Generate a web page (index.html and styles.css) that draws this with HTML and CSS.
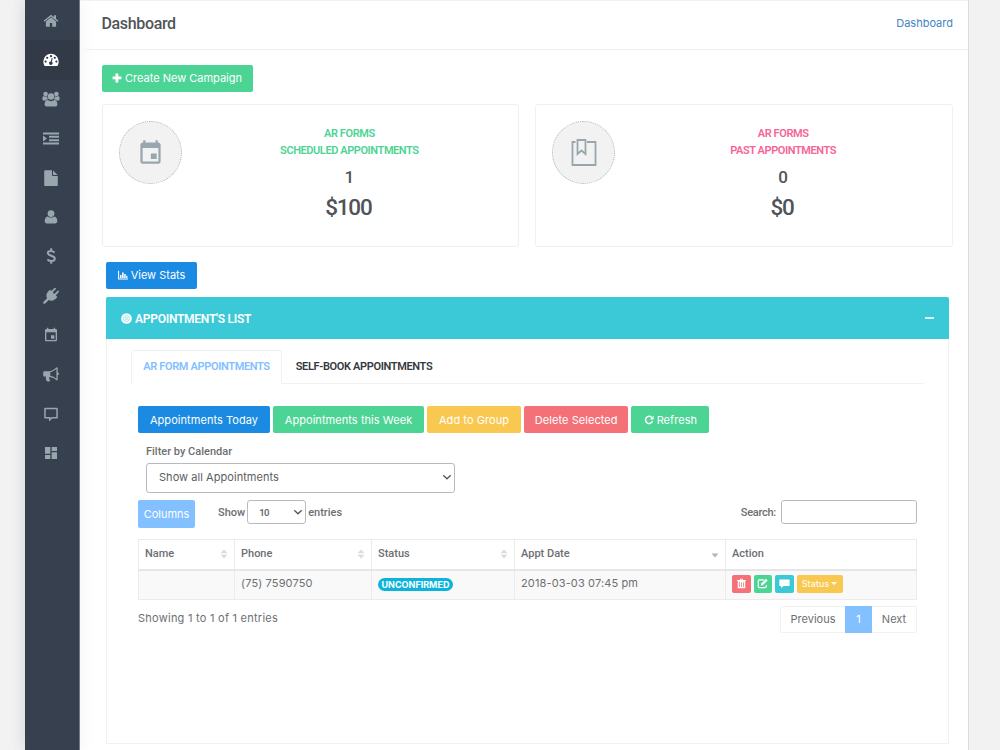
FILE: index.html
```
<!DOCTYPE html>
<html lang="en">
<head>
    <meta charset="UTF-8">
    <meta name="viewport" content="width=device-width, initial-scale=1.0">
    <title>Dashboard</title>
    <link rel="stylesheet" href="styles.css">
</head>
<body>
    <div class="wrapper">
        <nav class="sidebar">
            <a class="nav-item"><svg viewBox="0 0 16 16"><path d="M8 4.2 2.9 8.4v4.7c0 .4.3.6.6.6h3.3V10h2.4v3.7h3.3c.4 0 .6-.3.6-.6V8.4z"/><path d="M15.4 7.8 13 5.8V2.2h-2v1.9L8.9 2.4c-.5-.4-1.3-.4-1.8 0L.6 7.8l.9 1L8 3.4l6.5 5.4z"/></svg></a>
            <a class="nav-item active"><svg viewBox="0 0 16 16"><path fill-rule="evenodd" d="M8 1.8A7.7 7.7 0 0 0 .3 9.5c0 1.6.4 3 1.2 4.2.1.2.3.3.5.3h12c.2 0 .4-.1.5-.3a7.7 7.7 0 0 0 1.2-4.2A7.7 7.7 0 0 0 8 1.8zM2.6 8.5a1.1 1.1 0 1 1 0 2.2 1.1 1.1 0 0 1 0-2.2zM4.2 4.7a1.1 1.1 0 1 1 0 2.2 1.1 1.1 0 0 1 0-2.2zM8 3.1a1.1 1.1 0 1 1 0 2.2 1.1 1.1 0 0 1 0-2.2zM11.8 4.7a1.1 1.1 0 1 1 0 2.2 1.1 1.1 0 0 1 0-2.2zM13.4 8.5a1.1 1.1 0 1 1 0 2.2 1.1 1.1 0 0 1 0-2.2zM8.7 6.1l1 .3-.9 3.4a1.7 1.7 0 1 1-1-.3z"/></svg></a>
            <a class="nav-item"><svg class="wide" viewBox="0 0 18 16"><circle cx="3.6" cy="3" r="2.3"/><circle cx="14.4" cy="3" r="2.3"/><path d="M.4 8.3c0-2 .5-3.2 1.4-3.2 1 .7 2.3.8 3.4.2 0 1.3.3 2.2 1 3-1.1 0-2 .4-2.6 1.2H1.8C1 9.500.4 9.100.4 8.300zM17.6 8.300c0-2-.5-3.200-1.400-3.200-1 .7-2.300.8-3.400.2 0 1.300-.3 2.200-1 3 1.100 0 2 .4 2.600 1.200h1.800c.8 0 1.400-.4 1.400-1.200z"/><circle cx="9" cy="5.5" r="3.2"/><path d="M5.500 9c-1.800 0-2.900 2-2.900 4.300 0 1.400.9 2.200 2.200 2.200h8.400c1.300 0 2.200-.8 2.200-2.200 0-2.300-1.100-4.300-2.900-4.300-2 1.500-5 1.500-7 0z"/></svg></a>
            <a class="nav-item"><svg viewBox="0 0 16 16"><path d="M0 1.500h16v2H0zM6 4.800h10v2H6zM6 8.200h10v2H6zM0 11.500h16v2H0zM0 4.600l4 3-4 3z"/></svg></a>
            <a class="nav-item"><svg viewBox="0 0 16 16"><path d="M1.200 1c0-.5.3-.8.8-.8h7v5c0 .5.3.8.8.8h5v9.200c0 .4-.3.8-.8.8H2c-.5 0-.8-.4-.8-.8zM10 .4l4.600 4.600H10z"/></svg></a>
            <a class="nav-item"><svg viewBox="0 0 16 16"><circle cx="8" cy="4.6" r="3.4"/><path d="M4.700 7.400C2.700 7.500 1.700 9.600 1.700 12c0 1.300.9 2.400 2.200 2.400h8.200c1.300 0 2.200-1.100 2.200-2.400 0-2.400-1-4.500-3-4.600-2 1.600-4.600 1.600-6.600 0z"/></svg></a>
            <a class="nav-item"><svg viewBox="0 0 16 16"><path class="stroke" d="M11.600 4.500C10.300 3.300 8.800 2.900 7.700 2.900c-1.700 0-2.900.9-2.900 2.200 0 3.300 7 2 7 5.500 0 1.500-1.300 2.500-3.300 2.500-1.500 0-3-.5-4.100-1.600M8.200.3v2.400M8.200 13.200v2.500"/></svg></a>
            <a class="nav-item"><svg viewBox="0 0 16 16"><path d="M15.700 4.200c.4-.4.3-1-.1-1.300-.4-.4-.9-.4-1.300 0l-2.900 3-1.700-1.700 3-2.900c.4-.4.3-.9 0-1.200-.4-.4-.9-.4-1.300 0l-3 2.900L7 1.700 5.400 3.300c-2 2-2.600 4.800-1.300 7L.3 14v1.700H2L5.700 12c2.300 1.300 5.100.7 7.100-1.300l1.500-1.600-1.500-1.900z"/></svg></a>
            <a class="nav-item"><svg viewBox="0 0 24 24"><path d="M17 12.500h-5v5h5zM16 1v2H8V1H6v2H5c-1.100 0-2 .9-2 2v14.500c0 1.100.9 2 2 2h14c1.100 0 2-.9 2-2V5c0-1.100-.9-2-2-2h-1V1zm3 18.500H5V8h14z"/></svg></a>
            <a class="nav-item"><svg viewBox="0 0 16 16"><path fill-rule="evenodd" d="M14.700 2.100v4.200c1.600.2 1.600 2.600 0 2.800v4.500c-.1.800-.8 1-1.300.7-1.900-1.800-4.200-3-6.700-3.300-.7.3-.8 1-.2 1.600-.5.6 0 1.200.8 1.900-.6 1.200-3 1.100-3.700.5-.5-1.500-1.200-2.700-.6-4.400H1.500C.8 10.600.2 10 .2 9.300V6.600c0-.8.6-1.400 1.400-1.400h4c3 0 5.400-1.300 7.800-3.700.6-.4 1.300-.1 1.300.6zm-1.300.9c-1.900 1.600-3.900 2.700-6.100 3.100v3.700c2.200.4 4.200 1.500 6.100 3z"/></svg></a>
            <a class="nav-item"><svg viewBox="0 0 16 16"><path fill-rule="evenodd" d="M2 1.700h12c.5 0 .8.3.8.8v9.300c0 .5-.3.8-.8.8H9.300L6 15.500v-2.900H2c-.5 0-.8-.3-.8-.8V2.500c0-.5.3-.8.8-.8zm.7 1.500v7.900h4.800v1.200l1.300-1.200h4.500V3.200z"/></svg></a>
            <a class="nav-item"><svg viewBox="0 0 24 24"><path d="M3 13h8V3H3zm0 8h8v-6H3zm10 0h8V11h-8zm0-18v6h8V3z"/></svg></a>
        </nav>

        <main class="content">
            <header class="page-header">
                <h1>Dashboard</h1>
                <a class="breadcrumb">Dashboard</a>
            </header>

            <a class="btn green create"><svg viewBox="0 0 12 12"><path d="M4.200.7h3.400v3.500h3.700v3.400H7.600v3.700H4.200V7.600H.7V4.200h3.500z"/></svg>Create New Campaign</a>

            <div class="cards">
                <div class="card">
                    <div class="card-icon">
                        <svg viewBox="0 0 24 24"><path d="M17.500 12.800h-5.200v5h5.200zM16.500 1v2h-9V1h-2v2H5c-1.100 0-2 .9-2 2v15c0 1.100.9 2 2 2h14c1.100 0 2-.9 2-2V5c0-1.100-.9-2-2-2h-.5V1zm2.500 19H5V8h14z"/></svg>
                    </div>
                    <div class="card-info">
                        <h4 class="text-green">AR FORMS<br>SCHEDULED APPOINTMENTS</h4>
                        <div class="count">1</div>
                        <div class="amount">$100</div>
                    </div>
                </div>
                <div class="card">
                    <div class="card-icon">
                        <svg class="book" viewBox="0 0 26 28"><path class="line" d="M4.500 3H1.500v23h23V3H16M6.500 1h8v14l-4-3.500-4 3.500z"/></svg>
                    </div>
                    <div class="card-info">
                        <h4 class="text-pink">AR FORMS<br>PAST APPOINTMENTS</h4>
                        <div class="count">0</div>
                        <div class="amount">$0</div>
                    </div>
                </div>
            </div>

            <a class="btn blue stats"><svg viewBox="0 0 12 12"><path d="M0 1h1.300v9.200H12v1.300H0zM2.300 6h2v3.500h-2zM4.900 3h1.900v6.500H4.900zM7.400 4.800h1.800v4.700H7.400zM9.800 7h1.500v2.500H9.800z"/></svg>View Stats</a>

            <section class="panel">
                <div class="panel-header">
                    <h2><svg viewBox="0 0 12 12"><circle cx="6" cy="6" r="5.8"/><circle class="ring" cx="6" cy="6" r="3.2"/><circle class="ring" cx="6" cy="6" r="1.2"/></svg>APPOINTMENT'S LIST</h2>
                    <span class="collapse"></span>
                </div>
                <div class="panel-body">
                    <div class="tabs">
                        <a class="tab active">AR FORM APPOINTMENTS</a>
                        <a class="tab self-book">SELF-BOOK APPOINTMENTS</a>
                    </div>

                    <div class="toolbar">
                        <a class="btn blue today">Appointments Today</a>
                        <a class="btn green week">Appointments this Week</a>
                        <a class="btn yellow group">Add to Group</a>
                        <a class="btn red delete">Delete Selected</a>
                        <a class="btn green refresh"><svg viewBox="0 0 12 12"><path class="arc" d="M10.200 7.300A4.300 4.300 0 1 1 9.300 3"/><path d="M11.500 1v4.500H7z"/></svg>Refresh</a>
                    </div>

                    <div class="filter">
                        <label>Filter by Calendar</label>
                        <div class="select">Show all Appointments<svg viewBox="0 0 10 10"><path d="M1.300 3.200 5 6.800l3.700-3.600"/></svg></div>
                    </div>

                    <div class="table-controls">
                        <a class="btn light columns">Columns</a>
                        <div class="length">
                            <span>Show</span>
                            <div class="select small">10<svg viewBox="0 0 10 10"><path d="M1.300 3.200 5 6.800l3.700-3.600"/></svg></div>
                            <span>entries</span>
                        </div>
                        <label class="search"><span>Search:</span> <input type="text"></label>
                    </div>

                    <table>
                        <colgroup>
                            <col class="col-name">
                            <col class="col-phone">
                            <col class="col-status">
                            <col class="col-date">
                            <col class="col-action">
                        </colgroup>
                        <thead>
                            <tr>
                                <th><div class="th">Name<svg class="sort" viewBox="0 0 8 10"><path d="M4 .5 7.500 4.300h-7zM.5 5.700h7L4 9.500z"/></svg></div></th>
                                <th><div class="th">Phone<svg class="sort" viewBox="0 0 8 10"><path d="M4 .5 7.500 4.300h-7zM.5 5.700h7L4 9.500z"/></svg></div></th>
                                <th><div class="th">Status<svg class="sort" viewBox="0 0 8 10"><path d="M4 .5 7.500 4.300h-7zM.5 5.700h7L4 9.500z"/></svg></div></th>
                                <th><div class="th">Appt Date<svg class="sort desc" viewBox="0 0 8 10"><path d="M.5 4.500h7L4 8.500z"/></svg></div></th>
                                <th><div class="th">Action</div></th>
                            </tr>
                        </thead>
                        <tbody>
                            <tr>
                                <td></td>
                                <td class="phone">(75) 7590750</td>
                                <td><span class="badge">UNCONFIRMED</span></td>
                                <td class="date">2018-03-03 07:45 pm</td>
                                <td>
                                    <div class="actions">
                                        <a class="action red"><svg viewBox="0 0 12 12"><path fill-rule="evenodd" d="M1.200 2.200h3L4.600.7h2.800l.4 1.500h3v1h-.7v8.100H1.900V3.200h-.7zM5.200 2.200h1.600l-.2-.6H5.400zM3.500 4.500v5.300h.8V4.500zm2.100 0v5.300h.8V4.500zm2.100 0v5.300h.8V4.500z"/></svg></a>
                                        <a class="action green"><svg viewBox="0 0 12 12"><path class="edit" d="M7.500 2H2.700C1.900 2 1.400 2.500 1.400 3.200v6.100c0 .8.5 1.300 1.300 1.300h6.100c.8 0 1.300-.5 1.300-1.300V7.500"/><path d="M4.500 6.100 9.700.8l1.900 1.900-5.300 5.200-2.200.4z"/></svg></a>
                                        <a class="action teal"><svg viewBox="0 0 12 12"><path d="M1 1.500h10c.4 0 .6.2.6.6v6c0 .4-.2.6-.6.6H5L2.300 11V8.700H1c-.4 0-.6-.2-.6-.6v-6c0-.4.2-.6.6-.6z"/></svg></a>
                                        <a class="action yellow status">Status<i class="caret"></i></a>
                                    </div>
                                </td>
                            </tr>
                        </tbody>
                    </table>

                    <div class="table-footer">
                        <span class="info">Showing 1 to 1 of 1 entries</span>
                        <div class="pagination">
                            <a class="prev">Previous</a>
                            <a class="current">1</a>
                            <a class="next">Next</a>
                        </div>
                    </div>
                </div>
            </section>
        </main>
    </div>
</body>
</html>
```
FILE: styles.css
```
:root {
    --green: #4cd495;
    --blue: #1a8ae2;
    --light-blue: #82c0ff;
    --teal: #3bc9d8;
    --yellow: #f9c851;
    --red: #f57178;
    --pink: #f76397;
    --border: #f0f1f1;
    --heading-font: Roboto, "Liberation Sans", sans-serif;
}

* {
    box-sizing: border-box;
    margin: 0;
    padding: 0;
}

body {
    background: #f2f2f2;
    font-family: Inter, "Open Sans", sans-serif;
    font-size: 11px;
    color: #6d6f72;
    overflow: hidden;
}

.wrapper {
    display: flex;
    width: 944px;
    height: 750px;
    margin-left: 25px;
    background: #fff;
    border-right: 1px solid #dcdcdc;
    box-shadow: 0 0 16px rgba(0, 0, 0, 0.08);
    clip-path: inset(0 0 0 -20px);
}

svg {
    fill: currentColor;
    flex: none;
}

/* Sidebar */
.sidebar {
    width: 55px;
    padding-top: 1px;
    background: #37404e;
    border-right: 1px solid #747b87;
    box-shadow: 0 0 18px rgba(0, 0, 0, 0.06);
}

.nav-item {
    display: flex;
    align-items: center;
    justify-content: center;
    height: 39.3px;
    padding-right: 3px;
    color: #98a6ad;
}

.nav-item.active {
    background: #323a47;
    color: #fff;
}

.nav-item svg {
    width: 16px;
    height: 16px;
}

.nav-item svg.wide {
    width: 18px;
}

.nav-item .stroke {
    fill: none;
    stroke: currentColor;
    stroke-width: 2;
}

/* Content */
.content {
    flex: 1;
    min-width: 0;
    border-top: 1px solid var(--border);
}

.page-header {
    display: flex;
    align-items: center;
    justify-content: space-between;
    height: 49px;
    margin-left: 5px;
    padding: 0 15px 3px 16.5px;
    border-bottom: 1px solid var(--border);
}

h1,
h2,
h4,
label,
th,
.tab {
    font-family: var(--heading-font);
    font-weight: 600;
}

h1 {
    font-size: 16px;
    font-weight: 500;
    letter-spacing: -0.35px;
    color: #505458;
}

.breadcrumb {
    padding-bottom: 1px;
    color: #4285c4;
}

.btn {
    display: flex;
    align-items: center;
    justify-content: center;
    height: 27px;
    padding-bottom: 1px;
    border-radius: 2px;
    color: #fff;
    white-space: nowrap;
}

.btn svg {
    width: 10px;
    height: 10px;
    margin-right: 3px;
}

.green { background: var(--green); }
.blue { background: var(--blue); }
.light { background: var(--light-blue); }
.teal { background: var(--teal); }
.yellow { background: var(--yellow); }
.red { background: var(--red); }
.text-green { color: var(--green); }
.text-pink { color: var(--pink); }

.create {
    width: 151px;
    margin: 15px 0 0 21.5px;
}

.cards {
    display: flex;
    gap: 16px;
    margin: 12px 15px 0 21.5px;
}

.card {
    display: flex;
    flex: 1;
    height: 143px;
    padding: 16px;
    border: 1px solid #f0f0f0;
    border-radius: 3px;
}

.card-icon {
    display: flex;
    align-items: center;
    justify-content: center;
    width: 63px;
    height: 63px;
    border: 1px dotted #aab3b7;
    border-radius: 50%;
    background: #f2f2f2;
    color: #98a6ad;
}

.card-icon svg {
    width: 27px;
    height: 27px;
}

.card-icon svg.book {
    width: 26px;
    height: 28px;
}

.card-icon .line {
    fill: none;
    stroke: currentColor;
    stroke-width: 1.8;
}

.card-info {
    flex: 1;
    padding: 4px 0 0 15px;
    text-align: center;
    font-family: var(--heading-font);
    font-weight: 500;
    color: #505458;
}

.card-info h4 {
    font-size: 11px;
    line-height: 17px;
    letter-spacing: -0.42px;
}

.count {
    margin-top: 6px;
    font-size: 17px;
    line-height: 24px;
}

.amount {
    margin-top: 3px;
    padding-right: 2px;
    font-size: 22.5px;
    line-height: 31px;
    letter-spacing: -1.2px;
}

.stats {
    width: 91px;
    margin: 16px 0 8px 26px;
}

/* Appointments panel */
.panel {
    height: 447px;
    margin: 0 19px 0 26px;
    border: 1px solid var(--border);
    border-top: 0;
}

.cards + .stats {
    margin-top: 15px;
}

.panel-header {
    display: flex;
    align-items: center;
    justify-content: space-between;
    height: 42px;
    margin: 0 -1px;
    padding: 1px 15px 0;
    border-radius: 2px 2px 0 0;
    background: var(--teal);
    color: #fff;
}

h2 {
    display: flex;
    align-items: center;
    font-size: 12px;
    letter-spacing: -0.25px;
}

h2 svg {
    width: 11px;
    height: 11px;
    margin-right: 3px;
}

h2 .ring {
    fill: none;
    stroke: var(--teal);
    stroke-width: 0.5;
}

.collapse {
    width: 9px;
    height: 2px;
    margin-bottom: 2px;
    background: #d8f4f7;
}

.panel-body {
    padding: 11px 31px 0 31px;
}

.tabs {
    display: flex;
    height: 34px;
    margin: 0 -7px;
    border-bottom: 1px solid var(--border);
}

.tab {
    width: 151px;
    height: 34px;
    font-size: 11px;
    line-height: 32px;
    letter-spacing: -0.35px;
    text-align: center;
    color: #35393d;
    border: 1px solid transparent;
}

.tab.active {
    color: var(--light-blue);
    background: #fff;
    border-color: var(--border);
    border-bottom-color: #fff;
    border-radius: 3px 3px 0 0;
}

.tab.self-book {
    width: 164px;
}

.toolbar {
    display: flex;
    gap: 3px;
    margin-top: 22px;
}

.toolbar .btn {
    padding-bottom: 0;
    letter-spacing: 0.06px;
}

.today { width: 132px; }
.week { width: 151px; }
.group { width: 94px; }
.delete { width: 104.4px; }
.refresh { width: 78px; }

.refresh .arc {
    fill: none;
    stroke: currentColor;
    stroke-width: 1.8;
}

.filter {
    margin: 12px 0 0 8px;
}

.filter label {
    display: block;
    height: 18px;
    font-weight: 500;
}

.select {
    display: flex;
    align-items: center;
    justify-content: space-between;
    width: 309px;
    height: 30px;
    padding: 0 2px 2px 12px;
    border: 1px solid #b8babc;
    border-radius: 3px;
    color: #5b5e61;
    letter-spacing: 0.05px;
}

.select svg {
    width: 10px;
    height: 10px;
    fill: none;
    stroke: #55585b;
    stroke-width: 1.3;
}

.table-controls {
    display: flex;
    margin-top: 7px;
    font-family: var(--heading-font);
    font-weight: 500;
}

.btn.columns {
    width: 57px;
    height: 28px;
    padding: 0;
    font-family: Inter, "Open Sans", sans-serif;
    font-weight: 400;
}

.length {
    display: flex;
    align-items: center;
    gap: 2px;
    height: 24px;
    margin-left: 23px;
}

.select.small {
    width: 59px;
    height: 24px;
    padding: 0 2px 0 11px;
    font-size: 9.5px;
    letter-spacing: -0.5px;
}

.search {
    display: flex;
    align-items: center;
    gap: 5px;
    height: 24px;
    margin-left: auto;
    font-weight: 500;
    letter-spacing: -0.25px;
}

.search input {
    width: 136px;
    height: 24px;
    border: 1px solid #b8babc;
    border-radius: 3px;
    background: #fff;
}

table {
    width: 779px;
    margin-top: 11px;
    table-layout: fixed;
    border-collapse: collapse;
}

.col-name { width: 96px; }
.col-phone { width: 137px; }
.col-status { width: 143px; }
.col-date { width: 211px; }
.col-action { width: 191px; }

th,
td {
    height: 30px;
    padding: 0 6px;
    border: 1px solid #ebebeb;
    text-align: left;
}

th {
    border-bottom: 2px solid #e6e6e6;
    font-weight: 500;
}

.th {
    display: flex;
    align-items: center;
    justify-content: space-between;
    margin-top: -1px;
}

.sort {
    width: 8px;
    height: 10px;
    color: #dcdcdc;
}

.sort.desc {
    color: #b5b5b5;
}

tbody tr {
    background: #f9f9f9;
}

td.phone,
td.date {
    padding-bottom: 4px;
    letter-spacing: 0.13px;
}

.badge {
    display: block;
    width: 75px;
    height: 13px;
    border-radius: 7px;
    background: #0cb4dc;
    color: #fff;
    font-size: 9px;
    font-weight: 700;
    line-height: 13px;
    text-align: center;
}

.actions {
    display: flex;
    gap: 3px;
    padding-bottom: 2px;
}

.action {
    display: flex;
    align-items: center;
    justify-content: center;
    width: 18.5px;
    height: 18px;
    border-radius: 2px;
    color: #fff;
}

.action svg {
    width: 11px;
    height: 11px;
}

.action .edit {
    fill: none;
    stroke: currentColor;
    stroke-width: 1.3;
}

.action.status {
    width: 46px;
    font-size: 9px;
    letter-spacing: 0.15px;
}

.caret {
    margin-left: 2px;
    border: 3px solid transparent;
    border-top-color: #fff;
    border-bottom: 0;
}

.table-footer {
    display: flex;
    justify-content: space-between;
    margin-top: 6px;
}

.info {
    line-height: 24px;
    letter-spacing: 0.25px;
}

.pagination {
    display: flex;
    width: 137px;
    height: 27px;
    border: 1px solid var(--border);
    border-radius: 2px;
    line-height: 24px;
    text-align: center;
}

.prev { width: 64px; }

.current {
    width: 27px;
    height: 27px;
    margin-top: -1px;
    background: var(--light-blue);
    color: #fff;
    line-height: 26px;
}

.next { width: 44px; }
```
